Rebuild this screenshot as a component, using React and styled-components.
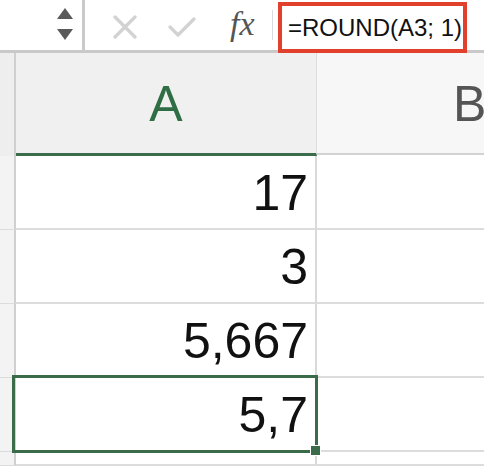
import styled, { createGlobalStyle } from "styled-components";

const GREEN = "#3a6c4a";

const GlobalStyle = createGlobalStyle`
  html, body {
    margin: 0;
    padding: 0;
    background: #ffffff;
    overflow: hidden;
  }
  body {
    font-family: "Liberation Sans", Arial, sans-serif;
  }
`;

const rows = ["17", "3", "5,667", "5,7"];
const SELECTED = 3;

export default function App() {
  return (
    <>
      <GlobalStyle />
      <Page>
        <FormulaBar>
          <NameBox>
            <Stepper>
              <svg width="16" height="11" viewBox="0 0 16 11">
                <polygon points="8,0 16,11 0,11" fill="#5a5a5a" />
              </svg>
              <svg width="16" height="11" viewBox="0 0 16 11">
                <polygon points="0,0 16,0 8,11" fill="#5a5a5a" />
              </svg>
            </Stepper>
          </NameBox>
          <Actions>
            <IconSlot>
              <svg width="24" height="24" viewBox="0 0 24 24">
                <path d="M2 2 L22 22 M22 2 L2 22" stroke="#d2d2d2" strokeWidth="3.2" strokeLinecap="round" />
              </svg>
            </IconSlot>
            <IconSlot>
              <svg width="28" height="22" viewBox="0 0 28 22">
                <path d="M2 11 L10 19 L26 3" stroke="#d2d2d2" strokeWidth="3.2" fill="none" strokeLinecap="round" strokeLinejoin="round" />
              </svg>
            </IconSlot>
            <Fx>fx</Fx>
            <ThinDivider />
          </Actions>
          <FormulaInput>=ROUND(A3; 1)</FormulaInput>
        </FormulaBar>

        <Sheet>
          <Corner />
          <ColHeader $active>A</ColHeader>
          <ColHeader>B</ColHeader>
          {rows.map((value, i) => (
            <Row key={i}>
              <RowHead />
              <Cell $selected={i === SELECTED}>{value}</Cell>
              <EmptyCell />
            </Row>
          ))}
          <Row>
            <RowHead />
            <Cell />
            <EmptyCell />
          </Row>
        </Sheet>
      </Page>
    </>
  );
}

const Page = styled.div`
  width: 484px;
  height: 466px;
  overflow: hidden;
  display: flex;
  flex-direction: column;
`;

const FormulaBar = styled.div`
  height: 50px;
  flex-shrink: 0;
  display: flex;
  align-items: stretch;
  border-bottom: 3px solid #c9c9c9;
  background: #ffffff;
`;

const NameBox = styled.div`
  width: 82px;
  display: flex;
  justify-content: flex-end;
  align-items: center;
  border-right: 3px solid #cacaca;
`;

const Stepper = styled.div`
  display: flex;
  flex-direction: column;
  gap: 10px;
  margin-right: 9px;
  margin-top: -2px;
`;

const Actions = styled.div`
  display: flex;
  align-items: center;
  padding-left: 25px;
`;

const IconSlot = styled.div`
  width: 30px;
  display: flex;
  justify-content: center;
  margin-right: 27px;
  margin-top: 4px;
`;

const Fx = styled.span`
  font-family: "Liberation Serif", "Times New Roman", serif;
  font-style: italic;
  font-size: 34px;
  color: #555555;
  margin-left: 6px;
  margin-top: -2px;
  width: 34px;
`;

const ThinDivider = styled.div`
  width: 1px;
  height: 30px;
  background: #dadada;
  margin-left: 8px;
  margin-right: 5px;
`;

const FormulaInput = styled.div`
  position: relative;
  z-index: 2;
  margin-top: 2px;
  margin-bottom: -3px;
  width: 175px;
  border: 4px solid #e0402c;
  display: flex;
  align-items: center;
  padding-left: 6px;
  font-size: 24px;
  color: #111111;
  background: #ffffff;
  white-space: nowrap;
`;

const Sheet = styled.div`
  flex: 1;
  display: grid;
  grid-template-columns: 16px 301px 1fr;
  grid-template-rows: 103px repeat(4, 74px) 1fr;
`;

const Row = styled.div`
  display: contents;
`;

const Corner = styled.div`
  background: #eeeeee;
  border-right: 2px solid #cfcfcf;
`;

const ColHeader = styled.div`
  display: flex;
  align-items: center;
  justify-content: ${({ $active }) => ($active ? "center" : "flex-start")};
  padding-top: 2px;
  font-size: 50px;
  color: ${({ $active }) => ($active ? "#2f6e45" : "#555555")};
  background: ${({ $active }) => ($active ? "#f0f0f0" : "#f7f7f7")};
  border-bottom: ${({ $active }) => ($active ? `3px solid ${GREEN}` : "2px solid #d2d2d2")};
  border-right: ${({ $active }) => ($active ? "1px solid #dddddd" : "none")};
  margin-bottom: ${({ $active }) => ($active ? "0" : "1px")};
  padding-left: ${({ $active }) => ($active ? "0" : "136px")};
  overflow: hidden;
  white-space: nowrap;
`;

const RowHead = styled.div`
  background: #f3f3f3;
  border-right: 2px solid #d0d0d0;
  border-bottom: 1px solid #dcdcdc;
`;

const Cell = styled.div`
  position: relative;
  z-index: ${({ $selected }) => ($selected ? 1 : 0)};
  display: flex;
  align-items: center;
  justify-content: flex-end;
  padding-right: 7px;
  padding-top: 2px;
  font-size: 50px;
  color: #111111;
  background: #ffffff;
  border-right: 2px solid #d9d9d9;
  border-bottom: 2px solid #dcdcdc;

  ${({ $selected }) =>
    $selected &&
    `
    &::after {
      content: "";
      position: absolute;
      left: -4px;
      top: -3px;
      right: -3px;
      bottom: -3px;
      border: 3px solid ${GREEN};
      pointer-events: none;
    }
    &::before {
      content: "";
      position: absolute;
      width: 9px;
      height: 9px;
      right: -6px;
      bottom: -6px;
      background: ${GREEN};
      border: 1px solid #ffffff;
      z-index: 1;
    }
  `}
`;

const EmptyCell = styled.div`
  background: #ffffff;
  border-bottom: 2px solid #dcdcdc;
`;
